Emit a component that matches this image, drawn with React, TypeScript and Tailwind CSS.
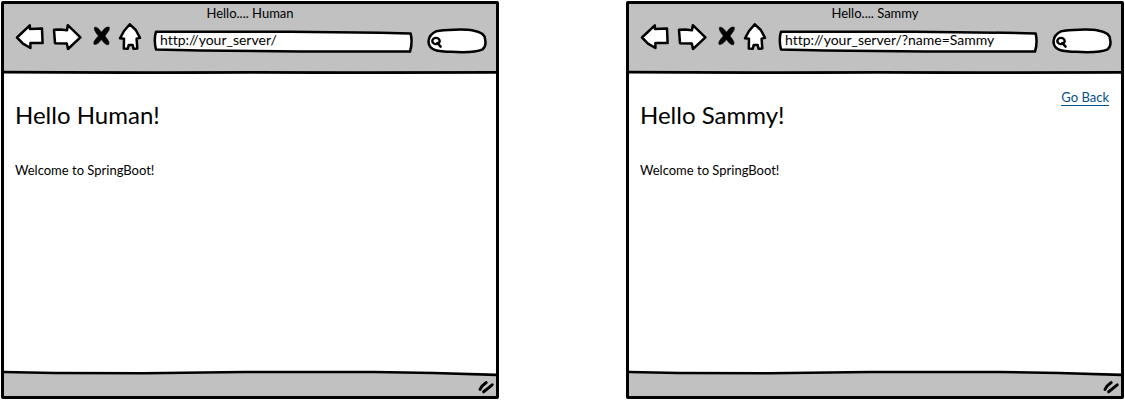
import React from "react";

type WindowProps = {
  name: string;
  url: string;
  back?: boolean;
};

const ink = {
  stroke: "#000",
  strokeWidth: 2.5,
  strokeLinejoin: "round" as const,
  strokeLinecap: "round" as const,
};

function BackIcon() {
  return (
    <svg className="h-8 w-8" viewBox="14 23 32 32" aria-hidden="true">
      <path d="M17 37.5 L29.8 25.3 L30 29 L42 28.6 L42.6 43 L30.4 43 L30.4 48 L23 43.6 Z" fill="#fff" {...ink} />
    </svg>
  );
}

function ForwardIcon() {
  return (
    <svg className="h-8 w-8" viewBox="52 23 32 32" aria-hidden="true">
      <path d="M54 29.8 L60 29.4 L67 30.2 L67.8 25.2 L80.4 37.3 L68 49 L66.8 43.6 L55 43.2 Z" fill="#fff" {...ink} />
    </svg>
  );
}

function StopIcon() {
  return (
    <svg className="h-8 w-[22px]" viewBox="90 23 22 32" aria-hidden="true">
      <path
        d="M94.6 27.2 C97.4 26.6 99.6 29.8 101.7 32.3 C103.3 29.5 106 26.3 109.2 27.2 C110.4 30 106.6 33.3 105 36 C107.3 39 110.4 42.5 108.4 44.7 C105.6 45.3 103.3 42 101.5 39.6 C99.6 42 97 45 94.1 44.4 C92.7 41.8 96.2 38.5 98.4 36 C96.4 33.2 93.4 29.8 94.6 27.2 Z"
        fill="#000"
        stroke="#000"
        strokeWidth="0.6"
      />
    </svg>
  );
}

function HomeIcon() {
  return (
    <svg className="h-8 w-[29px]" viewBox="118 23 29 32" aria-hidden="true">
      <path
        d="M129.8 24.3 L135.8 30 L140 37.8 L136.6 38.6 L137.3 48.4 L133.5 48.8 L132.7 45 L128.7 45 L127.8 48.8 L123.8 48.6 L124 38.8 L120 38.3 L124 31 Z"
        fill="#fff"
        {...ink}
      />
    </svg>
  );
}

function Toolbar({ url }: { url: string }) {
  return (
    <div className="mt-px flex h-8 items-center gap-1.5 pr-[9px] pl-2.5">
      <button type="button" aria-label="Back">
        <BackIcon />
      </button>
      <button type="button" aria-label="Forward">
        <ForwardIcon />
      </button>
      <button type="button" aria-label="Stop">
        <StopIcon />
      </button>
      <button type="button" aria-label="Home">
        <HomeIcon />
      </button>
      <div className="relative h-8 min-w-0 flex-1">
        <svg
          className="absolute inset-0 h-full w-full"
          viewBox="153 23 260 32"
          preserveAspectRatio="none"
          aria-hidden="true"
        >
          <path
            d="M156 31.7 L290 31.8 L380 32.8 L410.6 33.4 Q412.8 42 410 51.6 L300 51.4 L200 50.4 L156 49.4 Q153.6 40 156 31.7 Z"
            fill="#fff"
            {...ink}
          />
        </svg>
        <input
          type="text"
          aria-label="Address"
          defaultValue={url}
          className="relative mt-[7px] block h-5 w-full bg-transparent px-[7px] text-sm leading-5 [font-variant-ligatures:none] outline-none"
        />
      </div>
      <div className="relative ml-2 h-8 w-[60px]">
        <svg className="absolute inset-0 h-full w-full" viewBox="428 23 60 32" aria-hidden="true">
          <path
            d="M437 31.4 C445 29.6 466 29 474 30.4 C482 31.8 486 35 486 39 C487 43 486.4 47 483.6 49.3 C477 52.4 462 52.4 452 51.8 C446 51.4 438 52.2 433.4 48.8 C428 45 427.6 36 437 31.4 Z"
            fill="#fff"
            {...ink}
          />
          <ellipse cx="437" cy="41" rx="3.7" ry="3.1" fill="#fff" stroke="#000" strokeWidth="2.4" />
          <path d="M438.4 43 L441.6 46.6" fill="none" {...ink} />
        </svg>
        <input
          type="search"
          aria-label="Search"
          className="relative mt-[7px] ml-4 block h-5 w-9 bg-transparent text-sm outline-none"
        />
      </div>
    </div>
  );
}

function BrowserWindow({ name, url, back }: WindowProps) {
  return (
    <section className="flex min-w-0 flex-col rounded-[2px] border-[3px] border-black bg-white">
      <header className="bg-[#c1c1c1]">
        <div className="text-center text-[13px] leading-[18px]">Hello.... {name}</div>
        <Toolbar url={url} />
        <svg className="mt-3.5 block h-[5px] w-full" viewBox="0 0 492 5" preserveAspectRatio="none" aria-hidden="true">
          <path d="M0 3 L492 3 L492 5 L0 5 Z" fill="#fff" />
          <path d="M0 3.2 L60 3.4 L150 3.7 L250 3.4 L350 3.7 L492 3.3" fill="none" stroke="#000" strokeWidth="2.8" />
        </svg>
      </header>
      <main className="flex-1 pr-3 pl-[11px]">
        <div className="flex items-start justify-between pt-[15px]">
          <h1 className="mt-2.5 text-2xl leading-8">Hello {name}!</h1>
          {back && (
            <a href="/" className="border-b border-[#00508f] text-[13px] leading-4 text-[#00508f]">
              Go Back
            </a>
          )}
        </div>
        <p className="mt-[29px] text-[13px] leading-5">Welcome to SpringBoot!</p>
      </main>
      <footer>
        <svg className="block h-2 w-full" viewBox="0 0 492 8" preserveAspectRatio="none" aria-hidden="true">
          <path
            d="M-4 3 L50 4 L140 4.2 L240 3 L370 3 L430 4 L496 6 L496 10 L-4 10 Z"
            fill="#c1c1c1"
            stroke="#000"
            strokeWidth="2.6"
          />
        </svg>
        <div className="flex h-[19px] justify-end bg-[#c1c1c1]">
          <svg className="h-[19px] w-5" viewBox="476 377 20 19" aria-hidden="true">
            <path
              d="M480 389.4 C481.4 386.8 483.8 384.2 486.2 382.6 M483.6 391.8 C486.4 389.6 489.8 386.8 492.2 384.8"
              fill="none"
              stroke="#000"
              strokeWidth="3"
              strokeLinecap="round"
            />
          </svg>
        </div>
      </footer>
    </section>
  );
}

export default function App() {
  return (
    <div className="grid min-h-screen grid-cols-2 gap-[127px] bg-white p-px font-['Lato','Noto_Sans',sans-serif] text-black">
      <BrowserWindow name="Human" url="http://your_server/" />
      <BrowserWindow name="Sammy" url="http://your_server/?name=Sammy" back />
    </div>
  );
}
